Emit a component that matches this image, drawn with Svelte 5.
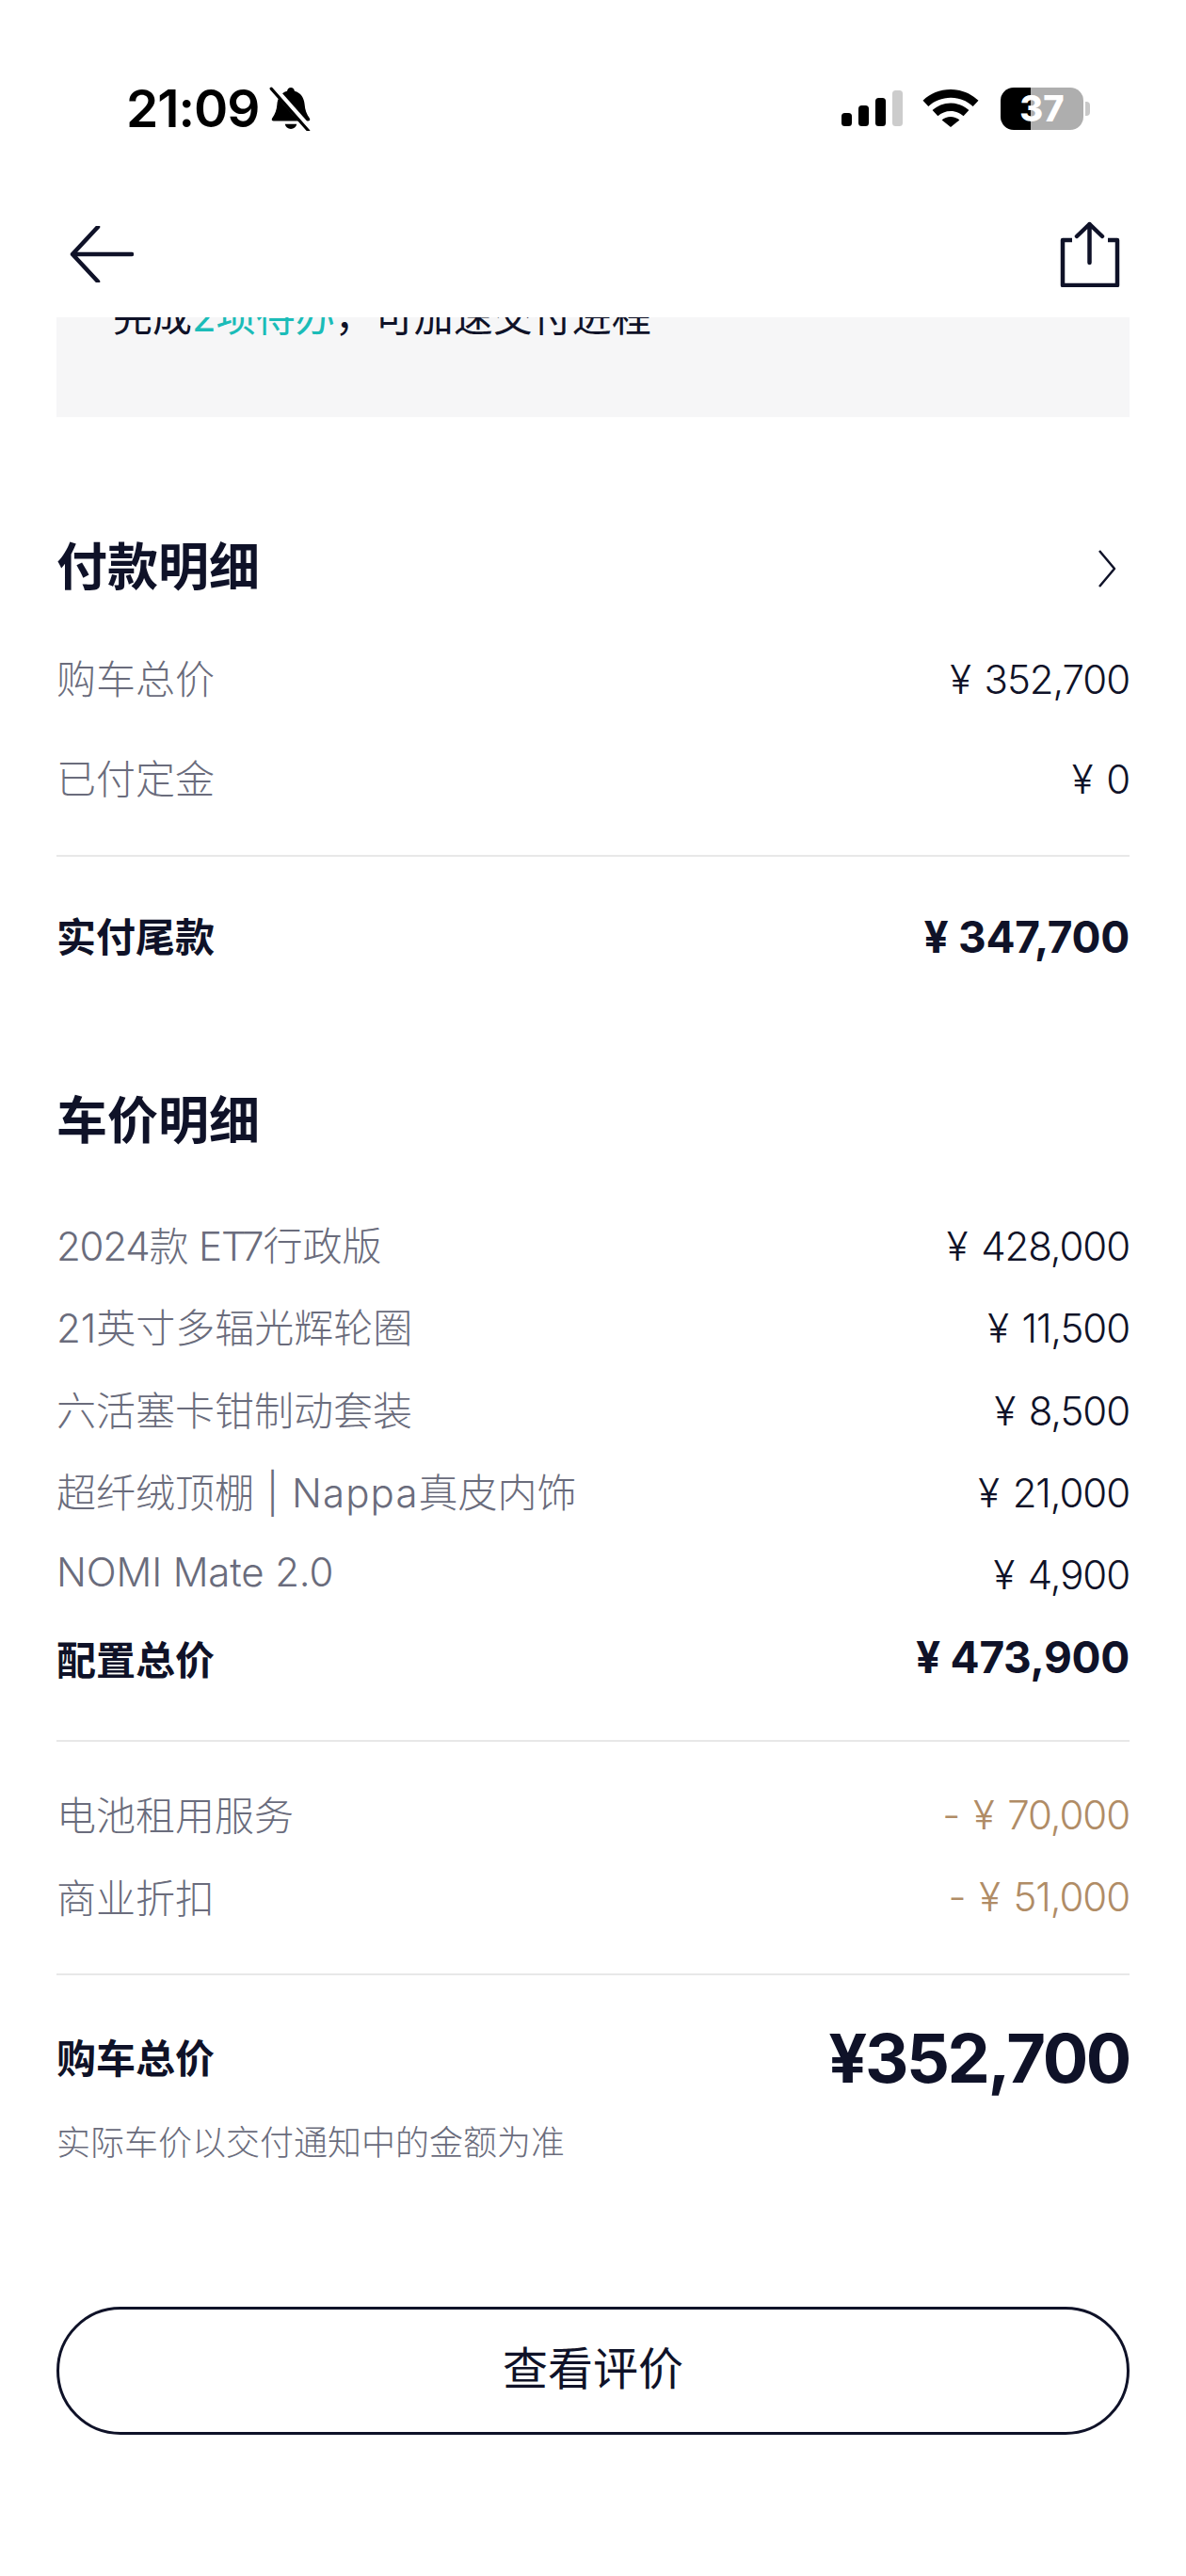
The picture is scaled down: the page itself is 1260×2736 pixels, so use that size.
<script>
    // track: letter-spacing for the Latin runs inside a mixed name
    const carItems = [
        { name: "2024款 ET7行政版", price: "¥ 428,000", track: -1.2 },
        { name: "21英寸多辐光辉轮圈", price: "¥ 11,500", track: 0 },
        { name: "六活塞卡钳制动套装", price: "¥ 8,500", track: 0 },
        { name: "超纤绒顶棚 | Nappa真皮内饰", price: "¥ 21,000", track: 1.1 },
        { name: "NOMI Mate 2.0", price: "¥ 4,900", track: -0.15 },
    ];

    const discounts = [
        { name: "电池租用服务", price: "- ¥ 70,000" },
        { name: "商业折扣", price: "- ¥ 51,000" },
    ];

    const isLatin = (run) => /^[\x20-\x7e]/.test(run);

    function runs(text) {
        return text.match(/[\x20-\x7e]+|[^\x20-\x7e]+/g);
    }
</script>

<div class="page">
    <div class="status">
        <div class="status-left">
            <span class="time">21:09</span>
            <svg class="bell" viewBox="0 0 44 46" aria-hidden="true">
                <path d="M22 2c2 0 3.5 1.500 3.800 3.400C32 7 35.500 12 36 19c.4 6 2 10 5 14 1 1.500.2 3-1.500 3H4.500C2.800 36 2 34.500 3 33c3-4 4.600-8 5-14 .5-7 4-12 10.200-13.600C18.500 3.500 20 2 22 2z" fill="#000" />
                <path d="M16 39h12c-.6 3.200-3 5-6 5s-5.400-1.800-6-5z" fill="#000" />
                <path d="M3 1l39 44" stroke="#fff" stroke-width="6.500" />
                <path d="M2 3l38 43" stroke="#000" stroke-width="3" stroke-linecap="round" />
            </svg>
        </div>
        <div class="status-right">
            <svg class="signal" viewBox="0 0 65 38" aria-hidden="true">
                <rect x="0" y="24" width="11" height="14" rx="3.500" fill="#000" />
                <rect x="18" y="16" width="11" height="22" rx="3.500" fill="#000" />
                <rect x="36" y="8" width="11" height="30" rx="3.500" fill="#000" />
                <rect x="54" y="0" width="11" height="38" rx="3.500" fill="#ccc" />
            </svg>
            <svg class="wifi" viewBox="0 0 60 40" aria-hidden="true">
                <path d="M30 0c11.500 0 21.800 4.400 29.500 11.700l-5.800 6.200C47.500 12.200 39 8.700 30 8.700s-17.500 3.500-23.700 9.200L.5 11.700C8.200 4.400 18.500 0 30 0z" fill="#000" />
                <path d="M30 14.500c7.500 0 14.300 2.900 19.400 7.600l-5.800 6.100C40 25 35.200 23 30 23s-10 2-13.600 5.200l-5.800-6.100C15.700 17.400 22.500 14.500 30 14.500z" fill="#000" />
                <path d="M30 29c3.600 0 6.900 1.300 9.400 3.500L30 40l-9.400-7.500C23.100 30.300 26.400 29 30 29z" fill="#000" />
            </svg>
            <div class="battery"><span>37</span></div>
        </div>
    </div>

    <nav class="nav">
        <svg class="back" viewBox="0 0 68 60" aria-hidden="true">
            <path d="M30 1L3 30l27 29M3 30h63" fill="none" stroke="#0f1228" stroke-width="4.500" stroke-linecap="round" stroke-linejoin="round" />
        </svg>
        <svg class="share" viewBox="0 0 64 70" aria-hidden="true">
            <path d="M13 20H3v48h58V20H51" fill="none" stroke="#0f1228" stroke-width="4.500" stroke-linejoin="round" />
            <path d="M31.500 44V3M18 16L31.500 3 45 16" fill="none" stroke="#0f1228" stroke-width="4.500" stroke-linecap="round" stroke-linejoin="round" />
        </svg>
    </nav>

    <section class="todo">
        <p>完成<em>2项待办</em>，可加速交付进程</p>
    </section>

    <header class="title first">
        <h2>付款明细</h2>
        <svg class="chevron" viewBox="0 0 24 40" aria-hidden="true">
            <path d="M4 1l16 19L4 39" fill="none" stroke="#0f1228" stroke-width="2.500" stroke-linejoin="round" />
        </svg>
    </header>
    <div class="pay-rows">
        <div class="row pay"><span class="name">购车总价</span><span class="price">¥ 352,700</span></div>
        <div class="row pay"><span class="name">已付定金</span><span class="price">¥ 0</span></div>
    </div>
    <hr class="pay-line" />
    <div class="row strong balance"><span class="label">实付尾款</span><span class="amount">¥ 347,700</span></div>

    <header class="title second">
        <h2>车价明细</h2>
    </header>
    <div class="car-rows">
        {#each carItems as item}
            <div class="row line">
                <span class="name">
                    {#each runs(item.name) as run}
                        <span style={isLatin(run) ? `letter-spacing: ${item.track}px` : ""}>{run}</span>
                    {/each}
                </span>
                <span class="price">{item.price}</span>
            </div>
        {/each}
        <div class="row line strong"><span>配置总价</span><span class="amount">¥ 473,900</span></div>
    </div>
    <hr class="car-line" />
    <div class="discounts">
        {#each discounts as item}
            <div class="row line"><span class="name">{item.name}</span><span class="price off">{item.price}</span></div>
        {/each}
    </div>
    <hr class="off-line" />
    <div class="row strong total"><span class="label small">购车总价</span><span class="grand">¥352,700</span></div>
    <p class="note">实际车价以交付通知中的金额为准</p>

    <button class="review">查看评价</button>
</div>

<style>
    :global(body) {
        margin: 0;
        background: #fff;
    }

    .page {
        height: 2736px;
        overflow: hidden;
        color: #0f1228;
        font-family: Inter, "Noto Sans CJK SC", sans-serif;
        box-sizing: border-box;
    }

    .status {
        display: flex;
        justify-content: space-between;
        align-items: center;
        height: 202px;
        padding: 28px 109px 0 134px;
        box-sizing: border-box;
        color: #000;
    }

    .status-left,
    .status-right {
        display: flex;
        align-items: center;
    }

    .time {
        font-family: Inter, sans-serif;
        font-size: 55px;
        font-weight: 600;
        letter-spacing: -1px;
    }

    .bell {
        width: 46px;
        height: 48px;
        margin-left: 10px;
    }

    .signal {
        width: 65px;
        height: 38px;
    }

    .wifi {
        width: 60px;
        height: 40px;
        margin-left: 21px;
    }

    .battery {
        position: relative;
        width: 88px;
        height: 45px;
        margin-left: 23px;
        border-radius: 14px;
        background: linear-gradient(90deg, #000 36%, #aeaeae 36%);
        color: #fff;
        font-family: Inter, sans-serif;
        font-size: 38px;
        font-weight: 800;
        line-height: 45px;
        text-align: center;
    }

    .battery::after {
        content: "";
        position: absolute;
        right: -7px;
        top: 15px;
        width: 5px;
        height: 15px;
        border-radius: 0 4px 4px 0;
        background: #c8c8c8;
    }

    .nav {
        display: flex;
        justify-content: space-between;
        align-items: center;
        height: 135px;
        padding: 0 70px 0 74px;
        box-sizing: border-box;
    }

    .back {
        width: 68px;
        height: 60px;
    }

    .share {
        width: 64px;
        height: 70px;
    }

    .todo {
        height: 106px;
        margin: 0 60px;
        overflow: hidden;
        background: #f6f6f7;
    }

    .todo p {
        margin: -26px 0 0 60px;
        font-size: 42px;
        line-height: 52px;
    }

    .todo em {
        font-style: normal;
        color: #1bbcb8;
    }

    .title {
        display: flex;
        justify-content: space-between;
        align-items: center;
        height: 100px;
        padding: 0 72px 0 60px;
    }

    .title.first {
        margin-top: 109px;
    }

    .title.second {
        margin-top: 95px;
    }

    h2 {
        margin: 0 0 7px;
        font-size: 54px;
        font-weight: 700;
    }

    .chevron {
        width: 24px;
        height: 40px;
        margin-top: 4px;
    }

    .pay-rows {
        margin-top: 16px;
    }

    .row {
        display: flex;
        justify-content: space-between;
        align-items: center;
        padding: 0 60px;
    }

    .row.pay {
        height: 106px;
    }

    .row.line {
        height: 87.300px;
    }

    .name {
        margin-bottom: 6px;
        color: #6a6c7c;
        font-size: 42px;
        font-weight: 300;
    }

    .price {
        font-size: 42px;
        font-weight: 300;
        letter-spacing: -1.1px;
        word-spacing: 4px;
    }

    .price.off {
        color: #b08c66;
    }

    .strong {
        font-size: 42px;
        font-weight: 700;
    }

    .label {
        margin-bottom: 6px;
    }

    .label.small {
        margin-bottom: 3px;
    }

    .amount {
        font-size: 46px;
        font-weight: 700;
        letter-spacing: -0.3px;
    }

    .balance {
        height: 100px;
        margin-top: 35px;
    }

    hr {
        height: 2px;
        margin: 0 60px;
        border: 0;
        background: #e8e8e8;
    }

    .pay-line {
        margin-top: 28px;
    }

    .car-rows {
        margin-top: 40px;
    }

    .car-line {
        margin-top: 44px;
    }

    .discounts {
        margin-top: 34px;
    }

    .discounts .name {
        margin-bottom: 3px;
    }

    .off-line {
        margin-top: 38px;
    }

    .total {
        height: 100px;
        margin-top: 37px;
    }

    .grand {
        font-size: 72px;
        font-weight: 700;
        letter-spacing: -2.4px;
    }

    .note {
        margin: 16px 60px 0;
        color: #6a6c7c;
        font-size: 36px;
        font-weight: 300;
        line-height: 50px;
    }

    .review {
        display: block;
        width: 1140px;
        height: 136px;
        margin: 149px 60px 0;
        padding: 0 0 13px;
        border: 3px solid #0f1228;
        border-radius: 68px;
        background: #fff;
        color: #0f1228;
        font-family: inherit;
        font-size: 48px;
        font-weight: 400;
    }
</style>
